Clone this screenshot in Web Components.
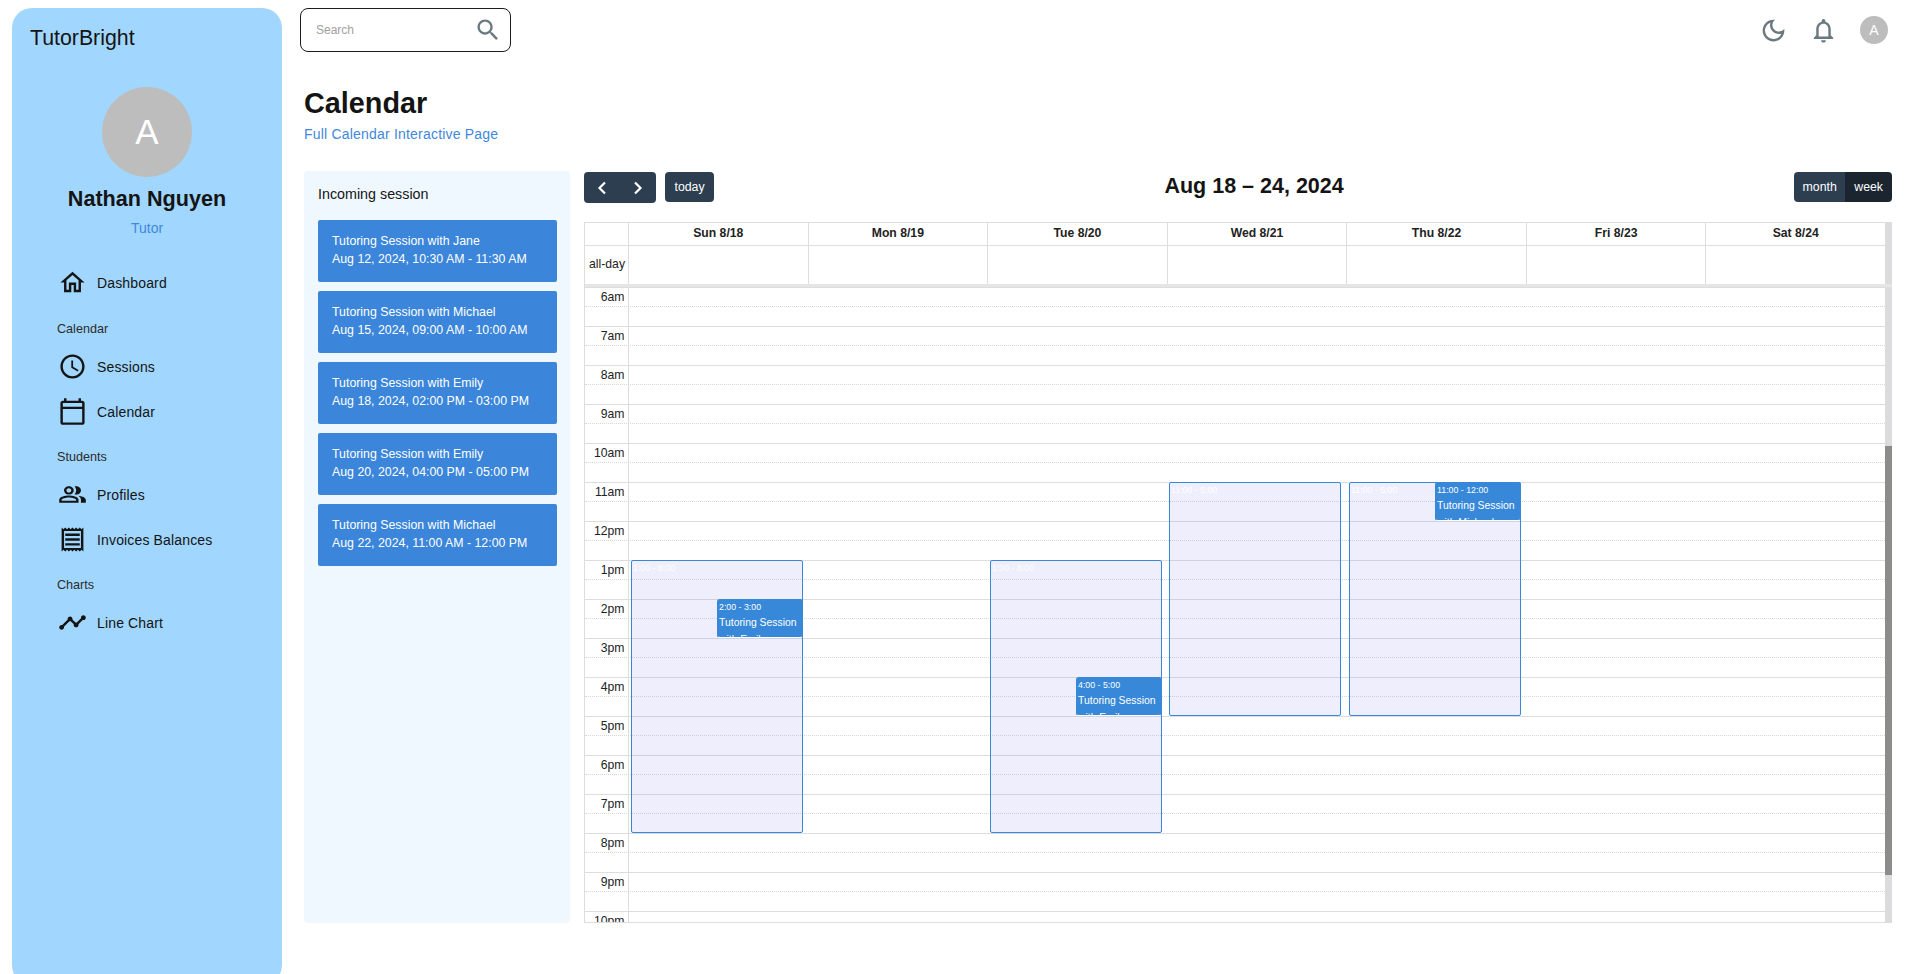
<!DOCTYPE html>
<html>
<head>
<meta charset="utf-8">
<title>TutorBright</title>
<style>
html, body { margin: 0; height: 100%; overflow: hidden; background: #fff; }
body { font-family: "Liberation Sans", Arial, sans-serif; color: #141414; }
</style>
</head>
<body>
<app-shell></app-shell>
<script>
(function () {
'use strict';

const ICONS = {
  home: '<path d="M12 5.69l5 4.5V18h-2v-6H9v6H7v-7.81l5-4.5M12 3L2 12h3v8h6v-6h2v6h6v-8h3L12 3z"/>',
  clock: '<path d="M11.99 2C6.47 2 2 6.48 2 12s4.47 10 9.99 10C17.52 22 22 17.52 22 12S17.52 2 11.99 2zM12 20c-4.42 0-8-3.58-8-8s3.58-8 8-8 8 3.58 8 8-3.58 8-8 8zm.5-13H11v6l5.25 3.15.75-1.23-4.5-2.67z"/>',
  calendar: '<path d="M20 3h-1V1h-2v2H7V1H5v2H4c-1.1 0-2 .9-2 2v16c0 1.1.9 2 2 2h16c1.1 0 2-.9 2-2V5c0-1.1-.9-2-2-2zm0 18H4V10h16v11zm0-13H4V5h16v3z"/>',
  people: '<g transform="translate(0 1.8) scale(1 .85)"><path d="M16.67 13.13C18.04 14.06 19 15.32 19 17v3h4v-3c0-2.18-3.57-3.47-6.33-3.87zM15 12c2.21 0 4-1.79 4-4s-1.79-4-4-4c-.47 0-.91.1-1.33.24C14.5 5.27 15 6.58 15 8s-.5 2.73-1.33 3.76c.42.14.86.24 1.33.24zM9 12c2.21 0 4-1.79 4-4s-1.79-4-4-4-4 1.79-4 4 1.79 4 4 4zm0-6c1.1 0 2 .9 2 2s-.9 2-2 2-2-.9-2-2 .9-2 2-2zM9 13c-2.67 0-8 1.34-8 4v3h16v-3c0-2.66-5.33-4-8-4zm6 5H3v-.99C3.2 16.29 6.3 15 9 15s5.8 1.29 6 2v1z"/></g>',
  receipt: '<path d="M19.5 3.5L18 2l-1.5 1.5L15 2l-1.5 1.5L12 2l-1.5 1.5L9 2 7.5 3.5 6 2 4.5 3.5 3 2v20l1.5-1.5L6 22l1.5-1.5L9 22l1.5-1.5L12 22l1.5-1.5L15 22l1.5-1.5L18 22l1.5-1.5L21 22V2l-1.5 1.5zM19 19.09H5V4.91h14V19.09zM6 15h12v2H6zm0-4h12v2H6zm0-4h12v2H6z"/>',
  chart: '<path d="M23 8c0 1.1-.9 2-2 2-.18 0-.35-.02-.51-.07l-3.56 3.55c.05.16.07.34.07.52 0 1.1-.9 2-2 2s-2-.9-2-2c0-.18.02-.36.07-.52l-2.55-2.55c-.16.05-.34.07-.52.07s-.36-.02-.52-.07l-4.55 4.56c.05.16.07.33.07.51 0 1.1-.9 2-2 2s-2-.9-2-2 .9-2 2-2c.18 0 .35.02.51.07l4.56-4.55C8.02 9.36 8 9.18 8 9c0-1.1.9-2 2-2s2 .9 2 2c0 .18-.02.36-.07.52l2.55 2.55c.16-.05.34-.07.52-.07s.36.02.52.07l3.55-3.56C19.02 8.35 19 8.18 19 8c0-1.1.9-2 2-2s2 .9 2 2z"/>',
  search: '<path d="M15.5 14h-.79l-.28-.27C15.41 12.59 16 11.11 16 9.5 16 5.91 13.09 3 9.5 3S3 5.91 3 9.5 5.91 16 9.5 16c1.61 0 3.09-.59 4.23-1.57l.27.28v.79l5 4.99L20.49 19l-4.99-5zm-6 0C7.01 14 5 11.99 5 9.5S7.01 5 9.5 5 14 7.01 14 9.5 11.99 14 9.5 14z"/>',
  moon: '<path d="M9.37 5.51C9.19 6.15 9.1 6.82 9.1 7.5c0 4.08 3.32 7.4 7.4 7.4.68 0 1.35-.09 1.99-.27C17.45 17.19 14.93 19 12 19c-3.86 0-7-3.14-7-7 0-2.93 1.81-5.45 4.37-6.49zM12 3c-4.97 0-9 4.03-9 9s4.03 9 9 9 9-4.03 9-9c0-.46-.04-.92-.1-1.36-.98 1.37-2.58 2.26-4.4 2.26-2.98 0-5.4-2.42-5.4-5.4 0-1.81.89-3.42 2.26-4.4C12.92 3.04 12.46 3 12 3z"/>',
  bell: '<path d="M12 22c1.1 0 2-.9 2-2h-4c0 1.1.9 2 2 2zm6-6v-5c0-3.07-1.63-5.64-4.5-6.32V4c0-.83-.67-1.5-1.5-1.5s-1.5.67-1.5 1.5v.68C7.64 5.36 6 7.92 6 11v5l-2 2v1h16v-1l-2-2zm-2 1H8v-6c0-2.48 1.51-4.5 4-4.5s4 2.02 4 4.5v6z"/>'
};

class BaseEl extends HTMLElement {
  constructor(css, html) {
    super();
    this.attachShadow({ mode: 'open' }).innerHTML = `<style>${css}</style>${html}`;
  }
}

class NavItem extends BaseEl {
  constructor() {
    super(`
:host{ display:flex; align-items:center; height:45px; color:#141414; font-size:14px; letter-spacing:.15px; }
svg{ width:29px; height:29px; margin:0 10px 0 0; flex:none; fill:currentColor; }
`, `<svg viewBox="0 0 24 24"></svg><slot></slot>`);
  }
  connectedCallback() {
    this.shadowRoot.querySelector('svg').innerHTML = ICONS[this.getAttribute('icon')];
  }
}
customElements.define('nav-item', NavItem);

class NavLabel extends BaseEl {
  constructor() {
    super(`
:host{ display:block; font-size:12.6px; line-height:16px; color:#2c2c2c; margin:15px 0 7px -1px; }
`, `<slot></slot>`);
  }
}
customElements.define('nav-label', NavLabel);

class SideBar extends BaseEl {
  constructor() {
    super(`
:host{ display:block; width:270px; height:977px; flex:none; margin:8px 0 0 12px; background:#a1d6fe; border-radius:20px; box-sizing:border-box; padding:17px 0 0 0; }
.logo{ font-size:21.3px; line-height:26px; margin-left:18px; color:#141414; }
.who{ display:flex; flex-direction:column; align-items:center; margin-top:36px; }
.avatar{ width:90px; height:90px; border-radius:50%; background:#bdbdbd; color:#fff; font-size:35px; display:flex; align-items:center; justify-content:center; }
h2{ margin:9px 0 0; font-size:21.6px; line-height:26px; font-weight:700; }
.role{ margin-top:8px; font-size:14px; line-height:17px; color:#3f88dc; }
nav{ display:block; margin:23px 0 0 46px; }
`, `<div class="logo">TutorBright</div>
<div class="who"><div class="avatar">A</div><h2>Nathan Nguyen</h2><div class="role">Tutor</div></div>
<nav>
<nav-item icon="home">Dashboard</nav-item>
<nav-label style="margin-top:16px">Calendar</nav-label>
<nav-item icon="clock">Sessions</nav-item>
<nav-item icon="calendar">Calendar</nav-item>
<nav-label>Students</nav-label>
<nav-item icon="people">Profiles</nav-item>
<nav-item icon="receipt">Invoices Balances</nav-item>
<nav-label>Charts</nav-label>
<nav-item icon="chart">Line Chart</nav-item>
</nav>`);
  }
}
customElements.define('side-bar', SideBar);

class TopBar extends BaseEl {
  constructor() {
    super(`
:host{ display:flex; align-items:center; justify-content:space-between; height:44px; color:#6a7880; }
.search{ width:211px; height:44px; box-sizing:border-box; border:1px solid #1c1c1c; border-radius:8px; display:flex; align-items:center; justify-content:space-between; padding:0 8px 0 15px; font-size:12px; color:#a0a0a0; }
.search svg{ width:28px; height:28px; fill:#6a7880; }
.right{ display:flex; align-items:center; margin-right:4px; }
.right svg{ width:29px; height:29px; fill:currentColor; flex:none; }
.bell{ margin-left:21px; }
.me{ margin-left:22px; width:28px; height:28px; border-radius:50%; background:#bdbdbd; color:#fff; font-size:14px; display:flex; align-items:center; justify-content:center; }
`, `<div class="search">Search<svg viewBox="0 0 24 24">${ICONS.search}</svg></div>
<div class="right"><svg viewBox="0 0 24 24">${ICONS.moon}</svg><svg class="bell" viewBox="0 0 24 24">${ICONS.bell}</svg><div class="me">A</div></div>`);
  }
}
customElements.define('top-bar', TopBar);

class SessionCard extends BaseEl {
  constructor() {
    super(`
:host{ display:block; height:62px; box-sizing:border-box; background:#3b86da; border-radius:2px; color:#fff; padding:12px 14px 0; font-size:12.35px; line-height:18px; }
b{ font-weight:400; display:block; }
`, `<b><slot name="title"></slot></b><slot></slot>`);
  }
}
customElements.define('session-card', SessionCard);

class SessionList extends BaseEl {
  constructor() {
    super(`
:host{ display:block; width:266px; height:752px; flex:none; box-sizing:border-box; background:#f0f8ff; border-radius:4px; padding:14px 13px 0 14px; }
.t{ font-size:14.3px; line-height:18px; margin-bottom:17px; }
.l{ display:flex; flex-direction:column; gap:9px; }
`, `<div class="t">Incoming session</div><div class="l"><slot></slot></div>`);
  }
}
customElements.define('session-list', SessionList);

class CalToolbar extends BaseEl {
  constructor() {
    super(`
:host{ display:flex; align-items:flex-start; justify-content:space-between; height:31px; }
.btn{ background:#2c3e50; color:#fff; font-size:12.3px; border-radius:4px; height:30px; margin-top:1px; display:flex; align-items:center; box-sizing:border-box; }
.left{ display:flex; gap:9px; }
.pair{ width:72px; height:31px; justify-content:space-around; }
.pair svg{ width:16px; height:16px; }
.today{ padding:0 9.5px; }
h3{ margin:0; font-size:21.5px; line-height:30px; font-weight:700; }
.views{ display:flex; height:30px; margin-top:1px; border-radius:4px; overflow:hidden; font-size:12.3px; color:#fff; }
.views span{ display:flex; align-items:center; padding:0 8.5px; background:#2c3e50; }
.views span.on{ background:#1a252f; padding:0 9px; }
`, `<div class="left"><div class="btn pair"><svg viewBox="0 0 16 16"><path d="M11 2.5L5.5 8l5.5 5.5" fill="none" stroke="#fff" stroke-width="2.2"/></svg><svg viewBox="0 0 16 16"><path d="M5 2.5L10.5 8 5 13.5" fill="none" stroke="#fff" stroke-width="2.2"/></svg></div><div class="btn today">today</div></div>
<h3>Aug 18 – 24, 2024</h3>
<div class="views"><span>month</span><span class="on">week</span></div>`);
  }
}
customElements.define('cal-toolbar', CalToolbar);

class CalEvent extends BaseEl {
  constructor() {
    super(`
:host{ position:absolute; box-sizing:border-box; overflow:hidden; background:#3788d8; border:1px solid #3788d8; border-bottom-color:#fff; border-radius:3px; color:#fff; font-size:8.8px; line-height:13px; padding:1px; }
:host([bg]){ background:rgba(120,120,240,.13); border-color:#3788d8; border-radius:2px; color:#fff; }
:host([bg]) .title{ display:none; }
.title{ font-size:10.4px; line-height:17px; }
`, `<div class="time"><slot name="time"></slot></div><div class="title"><slot></slot></div>`);
  }
}
customElements.define('cal-event', CalEvent);

class WeekGrid extends BaseEl {
  constructor() {
    const days = ['Sun 8/18', 'Mon 8/19', 'Tue 8/20', 'Wed 8/21', 'Thu 8/22', 'Fri 8/23', 'Sat 8/24'];
    const hours = [];
    for (let i = 0; i < 24; i++) {
      hours.push(i === 0 ? '12am' : i < 12 ? i + 'am' : i === 12 ? '12pm' : (i - 12) + 'pm');
    }
    super(`
:host{ display:block; width:1308px; height:701px; box-sizing:border-box; border:1px solid #ddd; border-width:1px 0 1px 1px; font-size:12.2px; color:#222; position:relative; }
.cols{ display:grid; grid-template-columns:43px repeat(7,1fr); width:1300px; }
.head>div{ height:23px; box-sizing:border-box; border-left:1px solid #ddd; border-bottom:1px solid #ddd; text-align:center; font-weight:700; line-height:21px; }
.head>div:first-child{ border-left:0; }
.allday>div{ height:38px; box-sizing:border-box; border-left:1px solid #ddd; }
.allday>div:first-child{ border-left:0; text-align:right; padding:10px 3px 0 0; line-height:17px; white-space:nowrap; }
.top{ border-bottom:3px solid #e6e6e6; }
.scroller{ height:635px; overflow:hidden; }
.body{ position:relative; height:936px; width:1300px; }
.hour{ height:39px; box-sizing:border-box; border-top:1px solid #ddd; position:relative; line-height:17px; }
.hour:after{ content:""; position:absolute; left:0; right:0; top:18px; border-top:1px dotted #d8d8d8; }
.hour span{ display:block; width:39.5px; text-align:right; padding-top:1px; }
.axis{ position:absolute; top:0; bottom:0; left:43px; border-left:1px solid #ddd; }
.track{ position:absolute; right:0; top:0; bottom:0; width:7px; background:#dcdcde; }
.cross{ position:absolute; right:0; top:61px; height:3px; width:7px; background:#e6e6e6; }
.thumb{ position:absolute; right:0; top:223px; height:429px; width:7px; background:#8c8c8a; }
`, `<div class="top"><div class="cols head"><div></div>${days.map(d => `<div>${d}</div>`).join('')}</div>
<div class="cols allday"><div>all-day</div>${days.map(() => '<div></div>').join('')}</div></div>
<div class="scroller"><div class="body">
${hours.map(h => `<div class="hour"><span>${h}</span></div>`).join('')}
<div class="axis"></div>
<slot></slot>
</div></div>
<div class="track"></div><div class="cross"></div><div class="thumb"></div>`);
  }
  connectedCallback() {
    this.shadowRoot.querySelector('.scroller').scrollTop = 234;
  }
}
customElements.define('week-grid', WeekGrid);

class AppShell extends BaseEl {
  constructor() {
    super(`
:host{ display:flex; align-items:flex-start; height:974px; }
main{ flex:1; min-width:0; padding:8px 16px 0 18px; box-sizing:border-box; display:flex; flex-direction:column; }
h1{ margin:35px 0 0 4px; font-size:28.8px; line-height:33px; font-weight:700; }
.sub{ margin:6px 0 0 4px; font-size:14px; line-height:17px; color:#3f88dc; letter-spacing:.2px; }
.row{ display:flex; gap:14px; margin:28px 0 0 4px; }
.cal{ flex:1; display:flex; flex-direction:column; gap:20px; min-width:0; }
`, `<side-bar></side-bar>
<main>
<top-bar></top-bar>
<h1>Calendar</h1>
<div class="sub">Full Calendar Interactive Page</div>
<div class="row">
<session-list>
<session-card><span slot="title">Tutoring Session with Jane</span>Aug 12, 2024, 10:30 AM - 11:30 AM</session-card>
<session-card><span slot="title">Tutoring Session with Michael</span>Aug 15, 2024, 09:00 AM - 10:00 AM</session-card>
<session-card><span slot="title">Tutoring Session with Emily</span>Aug 18, 2024, 02:00 PM - 03:00 PM</session-card>
<session-card><span slot="title">Tutoring Session with Emily</span>Aug 20, 2024, 04:00 PM - 05:00 PM</session-card>
<session-card><span slot="title">Tutoring Session with Michael</span>Aug 22, 2024, 11:00 AM - 12:00 PM</session-card>
</session-list>
<div class="cal">
<cal-toolbar></cal-toolbar>
<week-grid>
<cal-event bg style="left:46px;width:172px;top:507px;height:273px"><span slot="time">1:00 - 8:00</span></cal-event>
<cal-event style="left:132px;width:86px;top:546px;height:39px"><span slot="time">2:00 - 3:00</span>Tutoring Session with Emily</cal-event>
<cal-event bg style="left:405px;width:172px;top:507px;height:273px"><span slot="time">1:00 - 8:00</span></cal-event>
<cal-event style="left:491px;width:86px;top:624px;height:39px"><span slot="time">4:00 - 5:00</span>Tutoring Session with Emily</cal-event>
<cal-event bg style="left:584px;width:172px;top:429px;height:234px"><span slot="time">11:00 - 5:00</span></cal-event>
<cal-event bg style="left:764px;width:172px;top:429px;height:234px"><span slot="time">11:00 - 5:00</span></cal-event>
<cal-event style="left:850px;width:86px;top:429px;height:39px"><span slot="time">11:00 - 12:00</span>Tutoring Session with Michael</cal-event>
</week-grid>
</div>
</div>
</main>`);
  }
}
customElements.define('app-shell', AppShell);

}());
</script>
</body>
</html>
